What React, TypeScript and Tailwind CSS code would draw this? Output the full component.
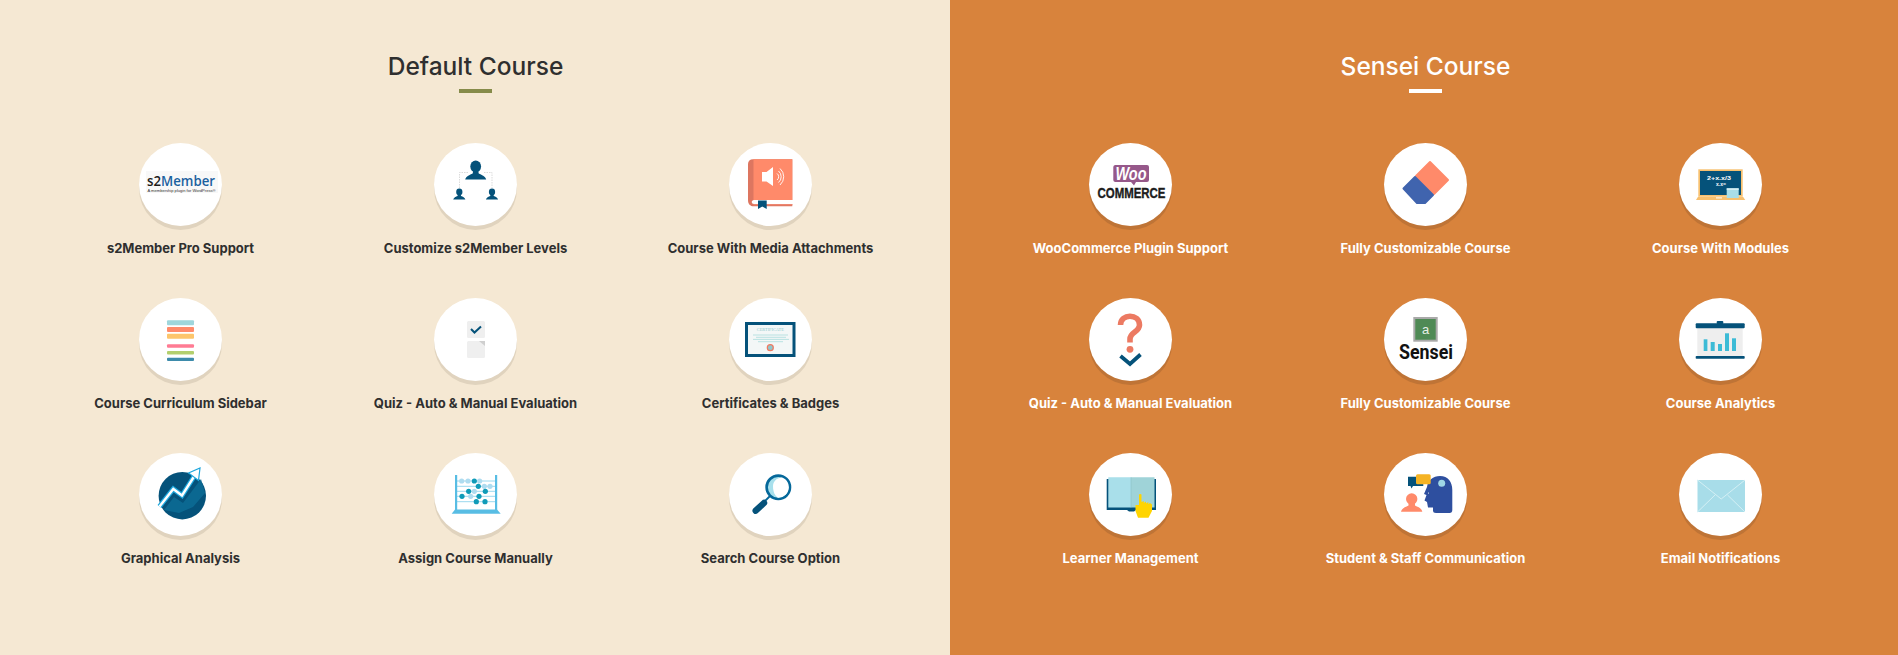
import type { ReactNode } from "react";

const NAVY = "#05527a";
const CORAL = "#ff8a6a";

// small bust used by the levels icon
const Person = ({ x, y, s, fill = NAVY }: { x: number; y: number; s: number; fill?: string }) => (
  <g transform={`translate(${x} ${y}) scale(${s})`} fill={fill}>
    <ellipse cx="0" cy="-7" rx="5.4" ry="6" />
    <path d="M-2.5 -3 L2.5 -3 L3 0 C6 1.5 9.5 2.5 10.5 6 L-10.5 6 C-9.5 2.5 -6 1.5 -3 0 Z" />
  </g>
);

const S2MemberIcon = () => (
  <>
    <rect x="7" y="28" width="72" height="22" fill="#f8f8f8" />
    <text x="8" y="43" fontFamily="'Open Sans', sans-serif" fontSize="14" fontWeight="600" textLength="68" lengthAdjust="spacingAndGlyphs">
      <tspan fill="#1c1c1c">s2</tspan>
      <tspan fill="#1b619f">Member</tspan>
    </text>
    <text x="8.5" y="49.3" fontFamily="'Liberation Sans', sans-serif" fontSize="3.6" fill="#333" textLength="68" lengthAdjust="spacingAndGlyphs">
      A membership plugin for WordPress®
    </text>
  </>
);

const LevelsIcon = () => (
  <>
    <path d="M25.5 45 V29.5 H34 M50 29.5 H58 V45" fill="none" stroke="#ccc" strokeWidth="0.7" strokeDasharray="1.5 1" />
    <Person x={41.7} y={30.5} s={1} />
    <Person x={25.3} y={53} s={0.58} />
    <Person x={58} y={53} s={0.58} />
  </>
);

const BookAudioIcon = () => (
  <>
    <path d="M24 16.3 H63.3 V57 H25 C22 57 22 61 25 61 H63.3 V63.3 H25 C21 63.3 19 61 19 57 V21 C19 18 21 16.3 24 16.3 Z" fill="#dd7660" />
    <rect x="24.5" y="16.3" width="38.8" height="40.7" fill={CORAL} />
    <rect x="24.5" y="61" width="38.8" height="1.2" fill="#ee8670" />
    <path d="M29 57.5 H37.7 V66 L33.3 63.5 L29 66 Z" fill={NAVY} />
    <path d="M33 29 H37.5 L44 24 V43 L37.5 38.5 H33 Z" fill="#fff" />
    <g fill="none" stroke="#fff" strokeWidth="0.9">
      <path d="M48 30.5 A4 4 0 0 1 48 37" />
      <path d="M49.5 28 A7.5 7.5 0 0 1 49.5 39.5" />
      <path d="M51 25.5 A11 11 0 0 1 51 42" />
    </g>
  </>
);

const CurriculumIcon = () => (
  <>
    <rect x="28" y="22.3" width="27" height="5" rx="1" fill="#9fd6dc" />
    <rect x="28" y="29" width="27" height="5" rx="1" fill={CORAL} />
    <rect x="28" y="35.7" width="27" height="5" rx="1" fill="#fdc56b" />
    <rect x="28" y="46.3" width="27" height="3.4" rx="1" fill="#ff7b93" />
    <rect x="28" y="53" width="27" height="3.4" rx="1" fill="#b3cf6d" />
    <rect x="28" y="59.7" width="27" height="3.4" rx="1" fill="#3d8bab" />
  </>
);

const QuizDocIcon = () => (
  <>
    <rect x="33" y="23" width="18" height="17" rx="1.5" fill="#efefef" />
    <path d="M37 31 L40.5 34.5 L47 28.5" fill="none" stroke={NAVY} strokeWidth="2" />
    <rect x="33" y="43" width="18" height="17" rx="1.5" fill="#efefef" />
    <path d="M45 43 H51 V48 Z" fill="#cfcfcf" />
  </>
);

const CertificateIcon = () => (
  <>
    <rect x="17.5" y="25.5" width="47.5" height="32" fill="#f3f7f7" stroke={NAVY} strokeWidth="3" />
    <text x="41.3" y="33.4" textAnchor="middle" fontFamily="'Liberation Serif', serif" fontSize="4" fill="#8cc7cb" textLength="27" lengthAdjust="spacingAndGlyphs">
      CERTIFICATE
    </text>
    <g stroke="#a9dcdc" strokeWidth="0.8">
      <path d="M24 37 H59" />
      <path d="M27 39.3 H57" />
      <path d="M24 41.4 H60" />
      <path d="M29 43.7 H54" />
    </g>
    <circle cx="41.3" cy="49.7" r="3" fill="#8fc7cc" stroke="#f0785f" strokeWidth="1.2" />
  </>
);

const GraphIcon = () => (
  <>
    <circle cx="43.3" cy="42.7" r="23.7" fill={NAVY} />
    <path d="M25 57 L35 44 L44 50 L62 26 L66 40 L54 54 L40 60 Z" fill="#0c6a94" opacity="0.9" />
    <path d="M20.5 53.5 L34.3 36 L43 42.5 L56 22" fill="none" stroke="#1da6dc" strokeWidth="5" />
    <path d="M20.5 53.5 L34.3 36 L43 42.5 L56 22" fill="none" stroke="#fff" strokeWidth="2.4" />
    <path d="M49.5 20 L61 15 L59.5 27.5 Z" fill="#fff" stroke="#1da6dc" strokeWidth="1.2" />
  </>
);

const AbacusIcon = () => {
  const rods = [28, 33.3, 38.3, 43.3, 48.7];
  const light = "#aedcf0";
  const dark = "#0f9bb8";
  const beads: [number, number, string][] = [
    [1025, 0, light], [1044, 0, light], [1063, 0, dark], [1079, 0, light],
    [1075, 1, dark], [1093, 1, light], [1110, 1, light],
    [1046, 2, dark], [1063, 2, light], [1096, 2, dark],
    [1026, 3, dark], [1052, 3, light], [1077, 3, dark],
    [1069, 4, dark], [1095, 4, dark],
  ];
  return (
    <>
      <g stroke="#9ad8ee" strokeWidth="1">
        {rods.map((y) => (
          <path key={y} d={`M22 ${y} H62`} />
        ))}
      </g>
      <rect x="21" y="22" width="2.2" height="37" fill="#58bde4" />
      <rect x="61" y="22" width="2.2" height="37" fill="#58bde4" />
      <path d="M21 56.5 H63 L66.7 60.7 H17.7 Z" fill="#58bde4" />
      {beads.map(([x, r, c]) => (
        <circle key={`${x}-${r}`} cx={(x - 942) / 3} cy={rods[r]} r="2.6" fill={c} />
      ))}
    </>
  );
};

const SearchIcon = () => (
  <>
    <circle cx="49.3" cy="34.3" r="11.7" fill="#a8e0ec" stroke="#05689a" strokeWidth="2.6" />
    <path d="M49 44.8 A10.5 10.5 0 0 0 59.8 34.3 A10.5 10.5 0 0 0 53 24.5 C47 25 44 29 44 33 C44 39 46 43 49 44.8 Z" fill="#fff" />
    <path d="M41 43 L36 48" stroke="#05689a" strokeWidth="1.8" />
    <path d="M35 50 L26.7 57.7" stroke={NAVY} strokeWidth="6.4" strokeLinecap="round" />
  </>
);

const WooIcon = () => (
  <>
    <path d="M26 22 H58 A2 2 0 0 1 60 24 V37 A2 2 0 0 1 58 39 H47 L45 42.5 L42 39 H26 A2 2 0 0 1 24.3 37 V24 A2 2 0 0 1 26 22 Z" fill="#96588a" />
    <text x="42" y="37" textAnchor="middle" fontFamily="'Liberation Sans', sans-serif" fontSize="18" fontWeight="700" fontStyle="italic" fill="#fff" textLength="31" lengthAdjust="spacingAndGlyphs">
      Woo
    </text>
    <text x="42.5" y="55" textAnchor="middle" fontFamily="'Liberation Sans', sans-serif" fontSize="15.5" fontWeight="700" fill="#1c1c1c" stroke="#1c1c1c" strokeWidth="0.4" textLength="68" lengthAdjust="spacingAndGlyphs">
      COMMERCE
    </text>
  </>
);

const EraserIcon = () => (
  <g strokeLinejoin="round" strokeWidth="2">
    <path d="M46 19 L64 37 L50 51 L32 33 Z" fill={CORAL} stroke={CORAL} />
    <path d="M31 34 L49 52 L41 60 L33 60 L19.5 45.5 Z" fill="#4064ae" stroke="#4064ae" />
  </g>
);

const ChalkboardIcon = () => (
  <>
    <rect x="19.3" y="26.3" width="44.4" height="27.4" fill="#f7c06f" />
    <rect x="21" y="28" width="41" height="24" fill={NAVY} />
    <path d="M19 53.7 H64 L66.3 57 H17 Z" fill="#f7c06f" />
    <rect x="37" y="54.4" width="6" height="1" fill="#fff" />
    <text x="28" y="36.5" fontFamily="'Liberation Sans', sans-serif" fontSize="5.5" fontWeight="700" fill="#fff" textLength="24" lengthAdjust="spacingAndGlyphs">
      2+x.x/3
    </text>
    <text x="37" y="43" fontFamily="'Liberation Sans', sans-serif" fontSize="5" fontWeight="700" fill="#fff">
      x.x=
    </text>
    <rect x="47.7" y="45.3" width="12" height="9.7" fill="#a8dde9" />
    <rect x="47.7" y="45.3" width="12" height="1.6" fill="#d8f0f4" />
  </>
);

const QuestionIcon = () => (
  <>
    <path d="M31.5 27 C31.5 15 50.5 15.5 50.5 27 C50.5 34 41 34 41 41 V44.5" fill="none" stroke="#ec7a62" strokeWidth="5.6" />
    <circle cx="41" cy="51.3" r="3.4" fill="#ec7a62" />
    <path d="M31.5 58 L41 66 L51.5 56.5" fill="none" stroke={NAVY} strokeWidth="3.8" />
  </>
);

const SenseiIcon = () => (
  <>
    <rect x="30.3" y="20" width="22.4" height="22.7" fill="#4f8a55" stroke="#a9a9a9" strokeWidth="2" />
    <text x="41.5" y="36" textAnchor="middle" fontFamily="'Liberation Sans', sans-serif" fontSize="13" fill="#e8efe8">
      a
    </text>
    <text x="42" y="61.3" textAnchor="middle" fontFamily="'Roboto', sans-serif" fontSize="20" fontWeight="700" fill="#111" textLength="54" lengthAdjust="spacingAndGlyphs">
      Sensei
    </text>
  </>
);

const AnalyticsIcon = () => (
  <>
    <rect x="18.3" y="30" width="45.4" height="28" fill="#eeeeee" />
    <rect x="16.7" y="25.3" width="49" height="5" rx="1" fill={NAVY} />
    <rect x="37.7" y="23" width="6.6" height="3" rx="1" fill={NAVY} />
    <rect x="16.7" y="58" width="49" height="2.7" rx="0.8" fill={NAVY} />
    <g fill="#3dbbd6">
      <rect x="24.7" y="41.3" width="3.7" height="11.7" />
      <rect x="31.7" y="44" width="4" height="9" />
      <rect x="39" y="46" width="4" height="7" />
      <rect x="46" y="35.3" width="4" height="17.7" />
      <rect x="53" y="40.3" width="4" height="12.7" />
    </g>
  </>
);

const LearnerIcon = () => (
  <>
    <path d="M17.7 26 H67 V57 H47 L45 58.5 H40 L38 57 H17.7 Z" fill={NAVY} />
    <path d="M19.3 24.3 H42 V54.5 H19.3 Z" fill="#a9dfea" />
    <path d="M42 24.3 H65.5 V54.5 H42 Z" fill="#9fd3d8" />
    <path d="M42 24.3 V54.5" stroke="#8cc0c8" strokeWidth="0.6" />
    <path d="M50 41.5 Q51.3 40.5 52.5 41.5 V49 L54.8 48 V50 L57 48.5 V50.5 L59.3 49 V51 L61 50 L63 51.5 V58 L59.5 64.7 H49 L46.5 58 V52 L50 52 Z" fill="#ffd400" />
  </>
);

const CommIcon = () => (
  <>
    <path d="M43 34 C44 27 49 23 56 23 C64 23 68.3 29 68.3 37 V57 Q68.3 60 65.5 60 H52 Q49 60 49 57.5 V54.5 H44 L43 49 L40.5 47.5 L42.5 42 L40 41 Z" fill="#2e4f9f" />
    <circle cx="57.7" cy="30.3" r="3.5" fill="#9fd6e6" />
    <circle cx="44.5" cy="40" r="0.6" fill="#fff" />
    <path d="M24 23.7 H39.3 V33 H29 L27.5 35.5 L26.5 33 H24 Z" fill={NAVY} />
    <rect x="32" y="21.3" width="14.7" height="10" rx="1.5" fill="#f5b324" />
    <circle cx="27.7" cy="46" r="5.7" fill={CORAL} />
    <path d="M24.5 50 H31 V52.5 C34 54 37.5 55 38.3 58.7 H17 C18 55 21.5 54 24.5 52.5 Z" fill={CORAL} />
  </>
);

const MailIcon = () => (
  <>
    <rect x="18.5" y="27" width="47.5" height="32" fill="#a8dde9" />
    <path d="M18.5 27 L42.2 46 L66 27" fill="none" stroke="#d4eff4" strokeWidth="1" />
    <path d="M18.5 59 L36 42 M66 59 L48.5 42" fill="none" stroke="#d4eff4" strokeWidth="1" />
  </>
);

type Feature = { label: string; icon: ReactNode };

const defaultFeatures: Feature[] = [
  { label: "s2Member Pro Support", icon: <S2MemberIcon /> },
  { label: "Customize s2Member Levels", icon: <LevelsIcon /> },
  { label: "Course With Media Attachments", icon: <BookAudioIcon /> },
  { label: "Course Curriculum Sidebar", icon: <CurriculumIcon /> },
  { label: "Quiz - Auto & Manual Evaluation", icon: <QuizDocIcon /> },
  { label: "Certificates & Badges", icon: <CertificateIcon /> },
  { label: "Graphical Analysis", icon: <GraphIcon /> },
  { label: "Assign Course Manually", icon: <AbacusIcon /> },
  { label: "Search Course Option", icon: <SearchIcon /> },
];

const senseiFeatures: Feature[] = [
  { label: "WooCommerce Plugin Support", icon: <WooIcon /> },
  { label: "Fully Customizable Course", icon: <EraserIcon /> },
  { label: "Course With Modules", icon: <ChalkboardIcon /> },
  { label: "Quiz - Auto & Manual Evaluation", icon: <QuestionIcon /> },
  { label: "Fully Customizable Course", icon: <SenseiIcon /> },
  { label: "Course Analytics", icon: <AnalyticsIcon /> },
  { label: "Learner Management", icon: <LearnerIcon /> },
  { label: "Student & Staff Communication", icon: <CommIcon /> },
  { label: "Email Notifications", icon: <MailIcon /> },
];

const FeatureItem = ({ label, icon, ring }: Feature & { ring: string }) => (
  <div className="flex h-[155px] flex-col items-center">
    <div className={`h-[83px] w-[83px] overflow-hidden rounded-full bg-white ${ring}`}>
      <svg viewBox="0 0 83 83" className="h-[83px] w-[83px]">
        {icon}
      </svg>
    </div>
    <p className="mt-[13px] text-center text-[13px] leading-[18px] font-bold">{label}</p>
  </div>
);

const Panel = ({
  title,
  features,
  className,
  barClass,
  ring,
}: {
  title: string;
  features: Feature[];
  className: string;
  barClass: string;
  ring: string;
}) => (
  <section className={`h-[655px] pt-[51px] pl-[33px] ${className}`}>
    <div className="w-[885px]">
      <h2 className="text-center text-[24.5px] leading-[30px] font-medium">{title}</h2>
      <div className={`mx-auto mt-[8px] mb-[50px] h-[4px] w-[33px] ${barClass}`} />
      <div className="grid grid-cols-3">
        {features.map((f, i) => (
          <FeatureItem key={i} {...f} ring={ring} />
        ))}
      </div>
    </div>
  </section>
);

export default function App() {
  return (
    <div className="flex min-h-[655px] w-full font-['Inter',sans-serif]">
      <Panel
        title="Default Course"
        features={defaultFeatures}
        className="w-[950px] bg-[#f5e8d3] text-[#2f2f2f]"
        barClass="bg-[#868b4a]"
        ring="shadow-[0_4px_0_#e0d3be]"
      />
      <Panel
        title="Sensei Course"
        features={senseiFeatures}
        className="flex-1 bg-[#d8833c] text-white"
        barClass="bg-white"
        ring="shadow-[0_4px_0_#bf7436]"
      />
    </div>
  );
}
